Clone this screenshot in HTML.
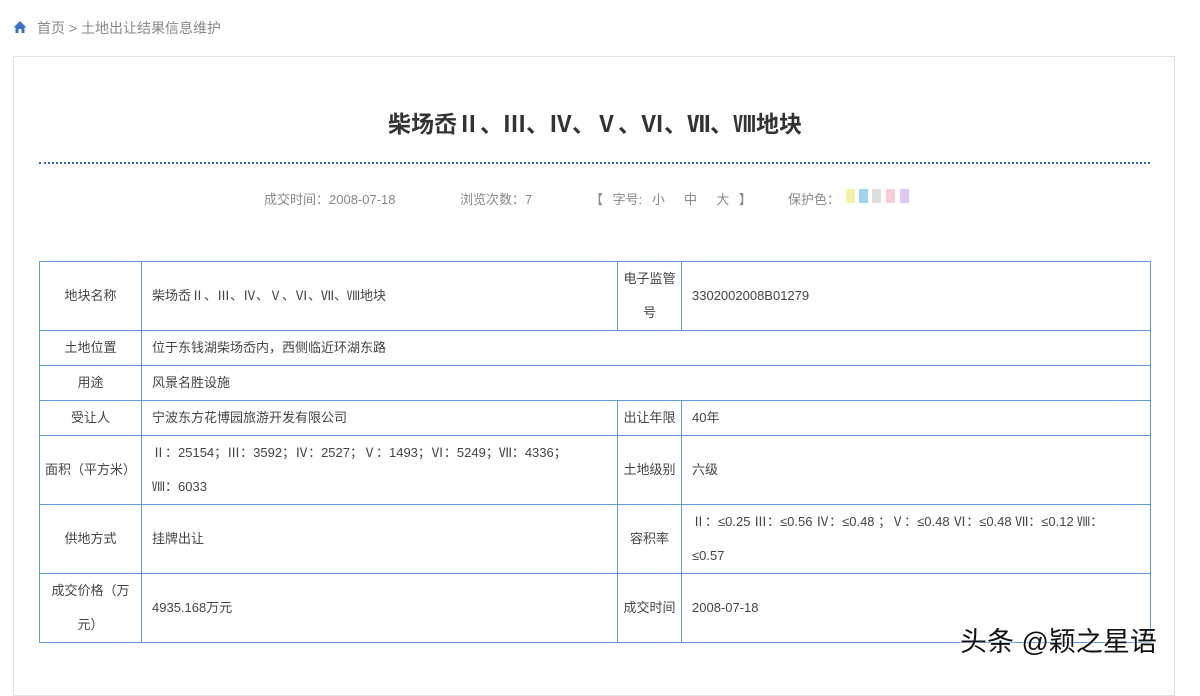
<!DOCTYPE html>
<html><head><meta charset="utf-8"><style>
body{margin:0;width:1200px;height:674px;background:#fff;overflow:hidden;position:relative;font-family:"Liberation Sans","Noto Sans CJK SC",sans-serif;color:#444}
.a{position:absolute}
.box{left:13px;top:56px;width:1162px;height:640px;border:1px solid #e2e2e2;box-sizing:border-box}
table{position:absolute;left:39px;top:261px;width:1111px;border-collapse:collapse;table-layout:fixed;font-size:13px;color:#444}
td{border:1px solid #5f98e0;padding:0 10px;line-height:34px;box-sizing:border-box}
td.l{text-align:center;padding:0 4px}
</style></head><body>
<svg class="a" style="left:13px;top:20px" width="14" height="14" viewBox="0 0 14 14"><path d="M7 1L0.5 7.5H2.5V13H5.5V9H8.5V13H11.5V7.5H13.5Z" fill="#3d6fc4"/></svg>
<div class="a" style="left:37px;top:18px;font-size:14px;color:#888">首页 &gt; 土地出让结果信息维护</div>
<div class="a box"></div>
<div class="a" style="left:0;width:1190px;top:105px;text-align:center;font-size:23px;font-weight:bold;color:#333">柴场岙Ⅱ、Ⅲ、Ⅳ、Ⅴ、Ⅵ、Ⅶ、Ⅷ地块</div>
<div class="a" style="left:39px;top:162px;width:1111px;border-top:2px dotted #3a5fbf"></div>
<div class="a" style="left:264px;top:189px;font-size:13px;color:#888">成交时间：2008-07-18</div>
<div class="a" style="left:460px;top:189px;font-size:13px;color:#888">浏览次数：7</div>
<div class="a" style="left:590px;top:189px;font-size:13px;color:#888;word-spacing:6px">【 字号: 小 &nbsp;中 &nbsp;大 】</div>
<div class="a" style="left:788px;top:189px;font-size:13px;color:#888">保护色：</div>
<div class="a" style="left:846px;top:189px;width:9px;height:14px;background:#f7f0a8"></div>
<div class="a" style="left:859px;top:189px;width:9px;height:14px;background:#9fd4f0"></div>
<div class="a" style="left:872px;top:189px;width:9px;height:14px;background:#dedede"></div>
<div class="a" style="left:886px;top:189px;width:9px;height:14px;background:#f8cfd8"></div>
<div class="a" style="left:900px;top:189px;width:9px;height:14px;background:#dfc9f2"></div>
<table>
<colgroup><col style="width:102px"><col style="width:476px"><col style="width:64px"><col style="width:469px"></colgroup>
<tr style="height:68px"><td class="l">地块名称</td><td>柴场岙Ⅱ、Ⅲ、Ⅳ、Ⅴ、Ⅵ、Ⅶ、Ⅷ地块</td><td class="l">电子监管号</td><td>3302002008B01279</td></tr>
<tr style="height:35px"><td class="l">土地位置</td><td colspan="3">位于东钱湖柴场岙内，西侧临近环湖东路</td></tr>
<tr style="height:35px"><td class="l">用途</td><td colspan="3">风景名胜设施</td></tr>
<tr style="height:35px"><td class="l">受让人</td><td>宁波东方花博园旅游开发有限公司</td><td class="l">出让年限</td><td>40年</td></tr>
<tr style="height:69px"><td class="l">面积（平方米）</td><td>Ⅱ：25154；Ⅲ：3592；Ⅳ：2527；Ⅴ：1493；Ⅵ：5249；Ⅶ：4336；<br>Ⅷ：6033</td><td class="l">土地级别</td><td>六级</td></tr>
<tr style="height:69px"><td class="l">供地方式</td><td>挂牌出让</td><td class="l">容积率</td><td>Ⅱ：≤0.25 Ⅲ：≤0.56 Ⅳ：≤0.48 ；Ⅴ：≤0.48 Ⅵ：≤0.48 Ⅶ：≤0.12 Ⅷ：<br>≤0.57</td></tr>
<tr style="height:68px"><td class="l">成交价格（万元）</td><td>4935.168万元</td><td class="l">成交时间</td><td>2008-07-18</td></tr>
</table>
<div class="a" style="left:960px;top:620px;font-size:27px;color:#111;text-shadow:0 0 2px #fff,0 0 2px #fff">头条 @颖之星语</div>
</body></html>
